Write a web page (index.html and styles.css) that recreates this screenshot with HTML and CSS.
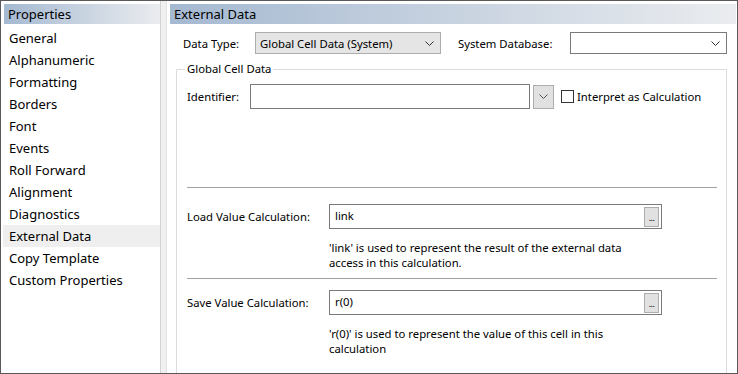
FILE: index.html
```html
<!DOCTYPE html>
<html lang="en">
<head>
    <meta charset="UTF-8">
    <title>Cell Properties - External Data</title>
    <link rel="stylesheet" href="styles.css">
</head>
<body>
    <div class="window">
        <div class="nav">
            <div class="pane-title">Properties</div>
            <ul class="nav-list">
                <li>General</li>
                <li>Alphanumeric</li>
                <li>Formatting</li>
                <li>Borders</li>
                <li>Font</li>
                <li>Events</li>
                <li>Roll Forward</li>
                <li>Alignment</li>
                <li>Diagnostics</li>
                <li class="selected">External Data</li>
                <li>Copy Template</li>
                <li>Custom Properties</li>
            </ul>
        </div>

        <div class="splitter"></div>

        <div class="content">
            <div class="pane-title">External Data</div>

            <div class="top-row">
                <label class="lbl lbl-type">Data Type:</label>
                <div class="combo combo-type">
                    <span>Global Cell Data (System)</span>
                    <svg class="chev" width="9" height="5" viewBox="0 0 9 5"><path d="M0.5 0.5 L4.5 4.5 L8.5 0.5" fill="none" stroke="#333" stroke-width="1"/></svg>
                </div>
                <label class="lbl lbl-db">System Database:</label>
                <div class="combo combo-db">
                    <span></span>
                    <svg class="chev" width="9" height="5" viewBox="0 0 9 5"><path d="M0.5 0.5 L4.5 4.5 L8.5 0.5" fill="none" stroke="#333" stroke-width="1"/></svg>
                </div>
            </div>

            <fieldset class="group">
                <legend>Global Cell Data</legend>

                <div class="ident-row">
                    <label class="lbl lbl-ident">Identifier:</label>
                    <div class="textbox ident-box"></div>
                    <div class="drop-btn">
                        <svg width="9" height="5" viewBox="0 0 9 5"><path d="M0.5 0.5 L4.5 4.5 L8.5 0.5" fill="none" stroke="#555" stroke-width="1"/></svg>
                    </div>
                    <div class="check"></div>
                    <span class="check-label">Interpret as Calculation</span>
                </div>

                <div class="sep sep-first"></div>

                <div class="calc-row">
                    <label class="lbl lbl-calc">Load Value Calculation:</label>
                    <div class="textbox calc-box">
                        <span>link</span>
                        <div class="dots-btn">...</div>
                    </div>
                </div>
                <p class="hint">'link' is used to represent the result of the external data<br>access in this calculation.</p>

                <div class="sep"></div>

                <div class="calc-row">
                    <label class="lbl lbl-calc">Save Value Calculation:</label>
                    <div class="textbox calc-box">
                        <span>r(0)</span>
                        <div class="dots-btn">...</div>
                    </div>
                </div>
                <p class="hint">'r(0)' is used to represent the value of this cell in this<br>calculation</p>
            </fieldset>
        </div>
    </div>
</body>
</html>
```

FILE: styles.css
```css
:root {
    --frame: #595959;
    --field-border: #7a7a7a;
    --btn-bg: #e1e1e1;
    --btn-border: #adadad;
    --group-line: #dcdcdc;
    --sep-line: #a0a0a0;
}

* {
    margin: 0;
    padding: 0;
    box-sizing: border-box;
}

body {
    font-family: 'Noto Sans', 'Open Sans', sans-serif;
    color: #000;
    background: #fff;
}

.window {
    width: 738px;
    height: 374px;
    border: 1px solid var(--frame);
    display: flex;
    overflow: hidden;
    background: #fff;
}

.pane-title {
    height: 20px;
    margin-top: 3px;
    padding-left: 4px;
    font-size: 13px;
    line-height: 20px;
    background: linear-gradient(to right, #a5b9d1, #eaecef);
}

/* left list */
.nav {
    width: 159px;
    flex-shrink: 0;
}

.nav .pane-title {
    margin-left: 3px;
}

.nav-list {
    list-style: none;
    margin-top: 3px;
    margin-left: 2px;
}

.nav-list li {
    height: 22px;
    line-height: 22px;
    padding-left: 6px;
    font-size: 13px;
}

.nav-list li.selected {
    background: #efefef;
}

.splitter {
    width: 7px;
    flex-shrink: 0;
    background: #f0f0f0;
    border-left: 1px solid #d4d4d4;
    border-right: 1px solid #e2e2e2;
}

/* right pane */
.content {
    flex: 1;
    padding-left: 3px;
    padding-right: 1px;
    font-size: 11.3px;
}

.top-row {
    display: flex;
    align-items: center;
    margin-top: 8px;
    padding-left: 13px;
}

.lbl {
    display: block;
    white-space: nowrap;
}

.lbl-type { width: 72px; }
.lbl-db { width: 112px; margin-left: 17px; }

.combo {
    height: 22px;
    display: flex;
    align-items: center;
    justify-content: space-between;
    padding: 0 6px 0 4px;
}

.combo-type {
    width: 186px;
    background: #e5e5e5;
    border: 1px solid var(--btn-border);
}

.combo-db {
    width: 157px;
    background: #fff;
    border: 1px solid var(--field-border);
}

.group {
    border: 1px solid var(--group-line);
    margin-top: 7px;
    margin-left: 6px;
    width: 551px;
    height: 320px;
    padding: 0 9px 0 10px;
}

.group legend {
    margin-left: -2px;
    padding: 0 2px;
    line-height: 16px;
}

.ident-row {
    display: flex;
    align-items: center;
    margin-top: 7px;
}

.lbl-ident { width: 63px; }

.textbox {
    height: 25px;
    border: 1px solid var(--field-border);
    background: #fff;
}

.ident-box { width: 280px; }

.drop-btn {
    width: 21px;
    height: 24px;
    margin-left: 3px;
    background: var(--btn-bg);
    border: 1px solid var(--btn-border);
    display: flex;
    align-items: center;
    justify-content: center;
}

.check {
    width: 13px;
    height: 13px;
    margin-left: 7px;
    border: 1px solid #333;
    background: #fff;
}

.check-label {
    margin-left: 3px;
}

.sep {
    height: 1px;
    background: var(--sep-line);
    margin-top: 8px;
}

.sep-first {
    margin-top: 78px;
}

.calc-row {
    display: flex;
    align-items: center;
    margin-top: 11px;
}

.sep-first + .calc-row {
    margin-top: 16px;
}

.lbl-calc { width: 142px; }

.calc-box {
    width: 333px;
    display: flex;
    align-items: center;
    justify-content: space-between;
    padding: 0 2px 0 5px;
}

.calc-box span {
    margin-top: -3px;
}

.dots-btn {
    width: 15px;
    height: 20px;
    background: var(--btn-bg);
    border: 1px solid var(--btn-border);
    font-size: 9px;
    line-height: 20px;
    text-align: center;
    letter-spacing: -0.5px;
}

.hint {
    margin-top: 11px;
    margin-left: 142px;
    line-height: 15px;
}
```
